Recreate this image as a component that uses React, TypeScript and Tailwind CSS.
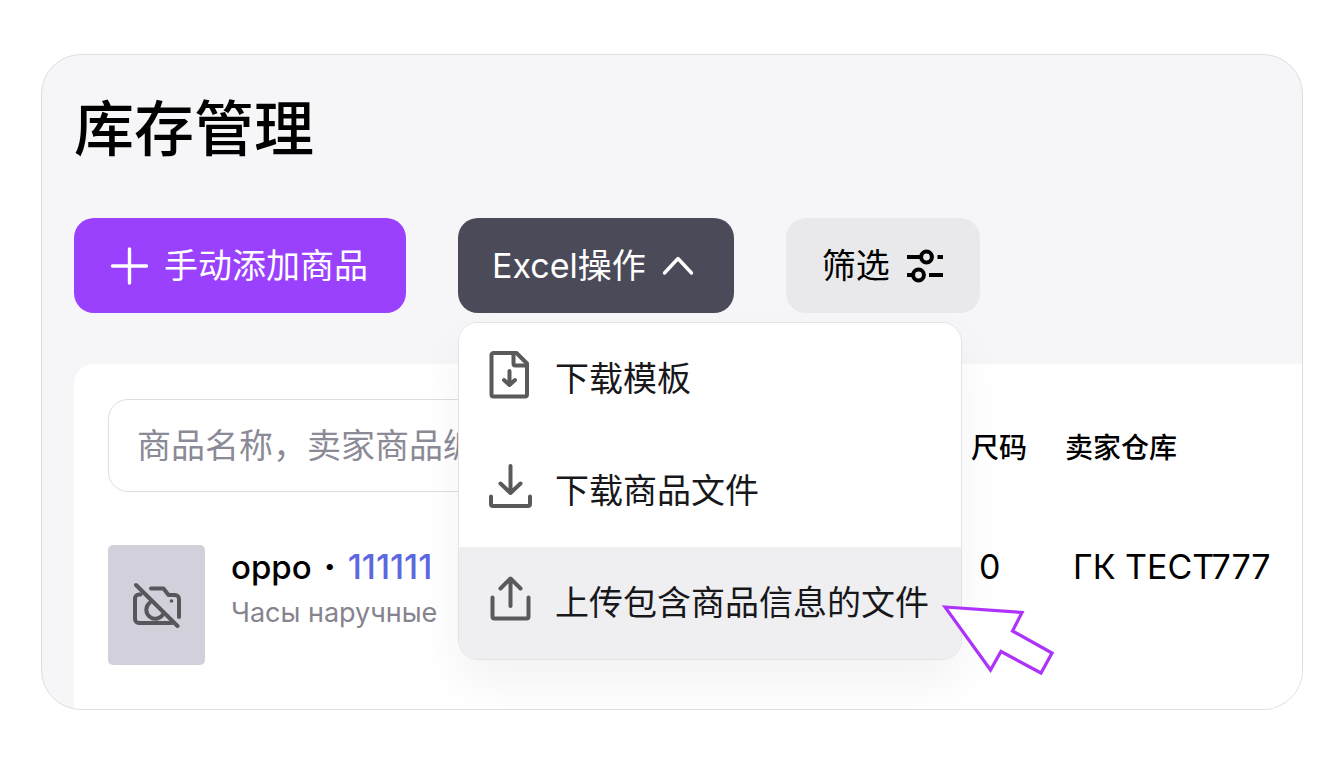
import React, { useState } from 'react';

interface IconProps {
  className?: string;
}

interface MenuItem {
  label: string;
  icon: React.FC<IconProps>;
  active?: boolean;
}

const PlusIcon: React.FC<IconProps> = ({ className }) => (
  <svg className={className} viewBox="0 0 38 38" fill="none" stroke="currentColor" strokeWidth={3.4} strokeLinecap="round">
    <path d="M19.5 2v34M2.5 19h34" />
  </svg>
);

const ChevronUpIcon: React.FC<IconProps> = ({ className }) => (
  <svg className={className} viewBox="0 0 32 32" fill="none" stroke="currentColor" strokeWidth={3.4} strokeLinecap="round" strokeLinejoin="round">
    <path d="M2.5 23 16 8.5 29.5 23" />
  </svg>
);

const FilterIcon: React.FC<IconProps> = ({ className }) => (
  <svg className={className} viewBox="0 0 38 36" fill="none" stroke="currentColor" strokeWidth={4}>
    <path d="M1 9h13M31.5 9h5.5M1 27h6M23 27h14" />
    <circle cx="20.5" cy="9" r="5.4" />
    <circle cx="12.5" cy="27" r="5.4" />
  </svg>
);

const FileDownIcon: React.FC<IconProps> = ({ className }) => (
  <svg className={className} viewBox="0 0 44 50" fill="none" stroke="currentColor" strokeWidth={4} strokeLinecap="round" strokeLinejoin="round">
    <path d="M4.5 3h23L38 13.5v31a2 2 0 0 1-2 2H4.5a2 2 0 0 1-2-2V5a2 2 0 0 1 2-2z" />
    <path d="M24.5 3v10.5a2 2 0 0 0 2 2H38" />
    <path d="M20.500 21v14M15 30l5.500 5 5.500-5" />
  </svg>
);

const DownloadIcon: React.FC<IconProps> = ({ className }) => (
  <svg className={className} viewBox="0 0 44 50" fill="none" stroke="currentColor" strokeWidth={4} strokeLinecap="round" strokeLinejoin="round">
    <path d="M21.5 4v27M11.5 21.5l10 9.500 10-9.500" />
    <path d="M2 34.5V42a2 2 0 0 0 2 2h35a2 2 0 0 0 2-2v-7.500" />
  </svg>
);

const UploadIcon: React.FC<IconProps> = ({ className }) => (
  <svg className={className} viewBox="0 0 44 50" fill="none" stroke="currentColor" strokeWidth={4} strokeLinecap="round" strokeLinejoin="round">
    <path d="M21.5 32V5M11.5 14.500l10-10 10 10" />
    <path d="M3.5 23.5v19a2 2 0 0 0 2 2h32a2 2 0 0 0 2-2v-19" />
  </svg>
);

const NoPhotoIcon: React.FC<IconProps> = ({ className }) => (
  <svg className={className} viewBox="0 0 50 46" fill="none" stroke="currentColor" strokeWidth={4} strokeLinecap="round" strokeLinejoin="round">
    <path d="M4 3l41.5 41" />
    <path d="M8.5 12.5H7a4 4 0 0 0-4 4V37a4 4 0 0 0 4 4h33" />
    <path d="M19 6.5h12.500l5 6.500H43a4 4 0 0 1 4 4v18" />
    <path d="M18 20.5a9 9 0 1 0 13.500 11" />
    <circle cx="39.5" cy="19" r="1.8" fill="currentColor" stroke="none" />
  </svg>
);

const PointerArrow: React.FC<IconProps> = ({ className }) => (
  <svg className={className} viewBox="0 0 112 72" fill="white" stroke="#ad33fb" strokeWidth={3.2}>
    <path d="M3 3 80 8.5 70.5 27 110 49 99 69 59 47.5 48.5 66z" />
  </svg>
);

const menuItems: MenuItem[] = [
  { label: '下载模板', icon: FileDownIcon },
  { label: '下载商品文件', icon: DownloadIcon },
  { label: '上传包含商品信息的文件', icon: UploadIcon, active: true },
];

const rows = [
  { name: 'oppo', sku: '111111', category: 'Часы наручные', size: '0', warehouse: 'ГК ТЕСТ777' },
];

const ExcelMenu: React.FC = () => {
  const [open, setOpen] = useState(true);

  return (
    <div className="relative">
      <button
        type="button"
        aria-expanded={open}
        onClick={() => setOpen(!open)}
        className="flex h-[95px] items-center gap-4 rounded-[20px] bg-[#4b4a58] pr-10 pl-[34px] text-[34px] leading-12 text-white"
      >
        Excel操作
        <ChevronUpIcon className="h-8 w-8" />
      </button>

      {open && (
        <div className="absolute top-full left-0 z-10 mt-[9px] w-[504px] rounded-[20px] border border-[#e4e4e8] bg-white shadow-[0_24px_48px_rgba(0,0,0,0.05)]">
          {menuItems.map(({ label, icon: Icon, active }) => (
            <button
              key={label}
              type="button"
              className={`flex h-28 w-full items-center gap-[22px] pl-[30px] text-left text-[34px] leading-12 text-[#18181b] first-of-type:rounded-t-[19px] last-of-type:rounded-b-[19px] ${active ? 'bg-[#efeff2]' : 'bg-white'}`}
            >
              <Icon className="mb-2 h-[50px] w-11 text-[#5a5a5c]" />
              {label}
            </button>
          ))}
          <PointerArrow className="pointer-events-none absolute -right-[93px] -bottom-[17px] h-[72px] w-28" />
        </div>
      )}
    </div>
  );
};

export default function App() {
  return (
    <div className="min-h-screen bg-white px-[41px] pt-[54px] pb-[54px] font-['Inter','Noto_Sans_CJK_SC',sans-serif] text-black">
      <main className="overflow-hidden rounded-[40px] border border-[#dedee0] bg-[#f6f6f9] pl-8">
        <h1 className="pt-8 text-[60px] leading-[84px] font-medium">库存管理</h1>

        <div className="mt-[47px] flex items-start gap-[52px]">
          <button type="button" className="flex h-[95px] items-center gap-4 rounded-[20px] bg-[#9a41fe] pr-[38px] pl-9 text-[34px] leading-12 text-white">
            <PlusIcon className="h-[38px] w-[38px]" />
            手动添加商品
          </button>
          <ExcelMenu />
          <button type="button" className="flex h-[95px] items-center gap-4 rounded-[20px] bg-[#e9e9eb] px-9 text-[34px] leading-12">
            筛选
            <FilterIcon className="h-9 w-[38px]" />
          </button>
        </div>

        {/* Stock table */}
        <section className="mt-[51px] rounded-tl-[20px] bg-white pt-[35px] pb-11 pl-[34px]">
          <table className="w-full text-left">
            <thead>
              <tr>
                <th className="p-0 pr-10 font-normal">
                  <input
                    type="text"
                    aria-label="商品搜索"
                    placeholder="商品名称，卖家商品编号"
                    className="block h-[93px] w-full rounded-[20px] border border-[#dfdfe3] bg-white px-7 text-[34px] leading-12 placeholder:text-[#8b8a97]"
                  />
                </th>
                <th className="w-[94px] p-0 pt-1 text-[28px] leading-10 font-medium">尺码</th>
                <th className="w-[237px] p-0 pt-1 text-[28px] leading-10 font-medium">卖家仓库</th>
              </tr>
            </thead>
            <tbody>
              {rows.map((row) => (
                <tr key={row.sku} className="align-top text-[34px] leading-[46px]">
                  <td className="p-0 pt-[52px]">
                    <div className="flex gap-[26px]">
                      <div className="mt-px flex h-[120px] w-[97px] items-center justify-center rounded-[5px] bg-[#d2d0da]">
                        <NoPhotoIcon className="h-[46px] w-[50px] text-[#57575b]" />
                      </div>
                      <div>
                        <p className="flex gap-3 font-medium">
                          <span className="text-[33px]">{row.name}</span>
                          <span className="font-extrabold">·</span>
                          <a href="#" className="text-[#5b68df]">{row.sku}</a>
                        </p>
                        <p className="text-[27px] text-[#85848f]">{row.category}</p>
                      </div>
                    </div>
                  </td>
                  <td className="p-0 pt-[52px] pl-2">{row.size}</td>
                  <td className="p-0 pt-[52px] pl-2 whitespace-nowrap">{row.warehouse}</td>
                </tr>
              ))}
            </tbody>
          </table>
        </section>
      </main>
    </div>
  );
}
